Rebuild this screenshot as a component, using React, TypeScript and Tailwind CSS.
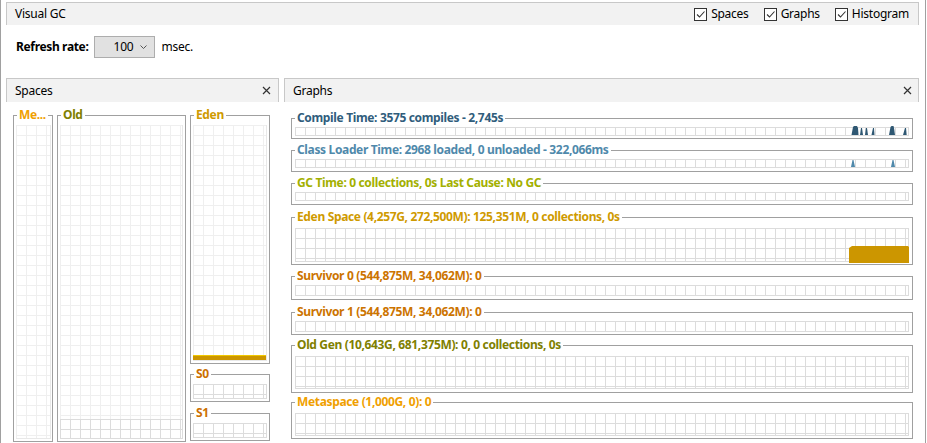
import React from 'react';

const darkGrid =
  'bg-[linear-gradient(to_right,#dcdcdc_1px,transparent_1px),linear-gradient(to_bottom,#dcdcdc_1px,transparent_1px)] bg-size-[10px_10px] border-r border-b border-[#dcdcdc]';
const faintGrid =
  'bg-[linear-gradient(to_right,#efefef_1px,transparent_1px),linear-gradient(to_bottom,#efefef_1px,transparent_1px)] bg-size-[10px_10px] border-r border-b border-[#e8e8e8]';

function Titled({
  title,
  color,
  className = '',
  bodyClass = '',
  children,
}: {
  title: string;
  color: string;
  className?: string;
  bodyClass?: string;
  children?: React.ReactNode;
}) {
  return (
    <div className={className}>
      <div className="flex h-[14px]">
        <div className="w-[4px] mt-[7px] border-l border-t border-[#a0a0a0]" />
        <span className={`px-[2px] leading-[14px] font-bold tracking-[-0.35px] whitespace-nowrap ${color}`}>{title}</span>
        <div className="flex-1 mt-[7px] border-t border-r border-[#a0a0a0]" />
      </div>
      <div className={`border-x border-b border-[#a0a0a0] ${bodyClass}`}>{children}</div>
    </div>
  );
}

function Check({ label }: { label: string }) {
  return (
    <label className="flex items-center gap-[4px]">
      <span className="w-[13px] h-[13px] border border-[#333] bg-white flex items-center justify-center">
        <svg width="11" height="11" viewBox="0 0 11 11">
          <path d="M2 5.5 L4.5 8 L9.5 2.5" fill="none" stroke="#333" strokeWidth="1.1" />
        </svg>
      </span>
      <span>{label}</span>
    </label>
  );
}

function Close() {
  return (
    <svg width="9" height="9" viewBox="0 0 9 9">
      <path d="M1 1 L8 8 M8 1 L1 8" stroke="#333" strokeWidth="1.2" />
    </svg>
  );
}

function CompileSpikes() {
  return (
    <svg className="absolute right-0 bottom-0 overflow-visible" width="60" height="10" viewBox="0 0 60 10">
      <g fill="#2f5873">
        <polygon points="3.5,10 5,2 6,1 9,1 10,3 10.5,10" />
        <polygon points="12,10 13,3 14,3 15,10" />
        <polygon points="17,10 18,3 19,3 20,10" />
        <polygon points="23.5,10 25,3 26,3 26.5,10" />
        <polygon points="41,10 42.5,2 43.5,1 45.5,1 46,3 47,10" />
        <polygon points="55,10 57,3 58,3 58.7,10" />
      </g>
    </svg>
  );
}

function ClassSpikes() {
  return (
    <svg className="absolute right-0 bottom-0 overflow-visible" width="60" height="10" viewBox="0 0 60 10">
      <g fill="#4f89ab">
        <polygon points="3,10 4.5,3 5.5,3 7,10" />
        <polygon points="43,10 44.5,3 45.5,3 47,10" />
      </g>
    </svg>
  );
}

function EdenBlock() {
  return (
    <svg className="absolute -right-[2px] -bottom-[2px]" width="62" height="18" viewBox="0 0 62 18">
      <polygon points="1,18 1,3 4,1 60,1 61,2 61,18" fill="#cc9600" />
    </svg>
  );
}

const graphs = [
  { title: 'Compile Time: 3575 compiles - 2,745s', color: 'text-[#305d7c]', mt: 'mt-0', body: 'h-[14px] pt-[2px]', grid: 'h-[9px]', chart: <CompileSpikes /> },
  { title: 'Class Loader Time: 2968 loaded, 0 unloaded - 322,066ms', color: 'text-[#4f89ab]', mt: 'mt-[4px]', body: 'h-[15px] pt-[2px]', grid: 'h-[9px]', chart: <ClassSpikes /> },
  { title: 'GC Time: 0 collections, 0s Last Cause: No GC', color: 'text-[#a3b000]', mt: 'mt-[4px]', body: 'h-[15px] pt-[2px]', grid: 'h-[9px]', chart: null },
  { title: 'Eden Space (4,257G, 272,500M): 125,351M, 0 collections, 0s', color: 'text-[#cf9a00]', mt: 'mt-[5px]', body: 'h-[41px] pt-[4px]', grid: 'h-[34px]', chart: <EdenBlock /> },
  { title: 'Survivor 0 (544,875M, 34,062M): 0', color: 'text-[#cc7400]', mt: 'mt-[4px]', body: 'h-[17px] pt-[2px]', grid: 'h-[11px]', chart: null },
  { title: 'Survivor 1 (544,875M, 34,062M): 0', color: 'text-[#cc7400]', mt: 'mt-[5px]', body: 'h-[16px] pt-[2px]', grid: 'h-[11px]', chart: null },
  { title: 'Old Gen (10,643G, 681,375M): 0, 0 collections, 0s', color: 'text-[#808000]', mt: 'mt-[3px]', body: 'h-[41px] pt-[4px]', grid: 'h-[33px]', chart: null },
  { title: 'Metaspace (1,000G, 0): 0', color: 'text-[#f0a000]', mt: 'mt-[2px]', body: 'h-[30px] pt-[4px]', grid: 'h-[23px]', chart: null },
];

export default function App() {
  return (
    <div className="w-[927px] h-[443px] bg-white overflow-hidden font-['Noto_Sans',sans-serif] text-[12px] tracking-[-0.25px] text-black">
      <div className="w-[926px] h-full border-x border-[#a0a0a0] pt-[2px] pl-[5px] pr-[6px]">
        {/* title bar */}
        <div className="h-[23px] border-t border-x border-[#c8c8c8] bg-[#f2f2f2] flex items-center justify-between pl-[8px] pr-[9px]">
          <span>Visual GC</span>
          <div className="flex items-center gap-[15px]">
            <Check label="Spaces" />
            <Check label="Graphs" />
            <Check label="Histogram" />
          </div>
        </div>

        {/* refresh rate */}
        <div className="mt-[11px] h-[22px] flex items-center pl-[10px]">
          <span className="font-bold tracking-[-0.35px]">Refresh rate:</span>
          <div className="ml-[6px] w-[61px] h-[22px] border border-[#adadad] bg-[#e1e1e1] flex items-center justify-end pr-[7px] gap-[7px]">
            <span>100</span>
            <svg width="7" height="5" viewBox="0 0 7 5">
              <path d="M0.5 0.5 L3.5 3.5 L6.5 0.5" fill="none" stroke="#555" strokeWidth="1" />
            </svg>
          </div>
          <span className="ml-[6px]">msec.</span>
        </div>

        {/* panels */}
        <div className="mt-[20px] flex gap-[5px]">
          <div className="w-[273px]">
            <div className="h-[24px] border-t border-x border-[#c8c8c8] bg-[#f2f2f2] flex items-center justify-between pl-[8px] pr-[7px]">
              <span>Spaces</span>
              <Close />
            </div>
            <div className="h-[341px] pt-[6px] pl-[7px] flex gap-[4px] items-start">
              <Titled title="Me..." color="text-[#f0a000]" className="w-[40px]" bodyClass="h-[320px] pl-[2px] pr-[1px] pt-[3px] pb-[2px] flex flex-col">
                <div className={`flex-1 ${faintGrid}`} />
              </Titled>
              <Titled title="Old" color="text-[#808000]" className="w-[129px]" bodyClass="h-[320px] pl-[2px] pr-[2px] pt-[3px] pb-[2px] flex flex-col">
                <div className={`flex-1 ${faintGrid} border-b-0`} />
                <div className={`h-[20px] ${darkGrid}`} />
              </Titled>
              <div className="w-[80px] flex flex-col">
                <Titled title="Eden" color="text-[#cf9a00]" bodyClass="h-[242px] px-[2px] pt-[3px] pb-[2px] flex flex-col">
                  <div className={`flex-1 ${faintGrid} flex flex-col justify-end`}>
                    <div className="h-[5px] bg-[#cc9600] border-t border-[#f0c800]" />
                  </div>
                </Titled>
                <Titled title="S0" color="text-[#cc7000]" className="mt-[3px]" bodyClass="h-[21px] px-[2px] pt-[3px] pb-[2px]">
                  <div className={`h-[15px] ${darkGrid}`} />
                </Titled>
                <Titled title="S1" color="text-[#cc7000]" className="mt-[4px]" bodyClass="h-[21px] px-[2px] pt-[3px] pb-[2px]">
                  <div className={`h-[15px] ${darkGrid}`} />
                </Titled>
              </div>
            </div>
          </div>

          <div className="w-[635px]">
            <div className="h-[24px] border-t border-x border-[#c8c8c8] bg-[#f2f2f2] flex items-center justify-between pl-[8px] pr-[6px]">
              <span>Graphs</span>
              <Close />
            </div>
            <div className="pt-[9px] pl-[7px] pr-[6px] flex flex-col">
              {graphs.map(g => (
                <Titled key={g.title} title={g.title} color={g.color} className={g.mt} bodyClass={`${g.body} pl-[3px] pr-[3px]`}>
                  <div className={`relative ${g.grid} ${darkGrid}`}>{g.chart}</div>
                </Titled>
              ))}
            </div>
          </div>
        </div>
      </div>
    </div>
  );
}
